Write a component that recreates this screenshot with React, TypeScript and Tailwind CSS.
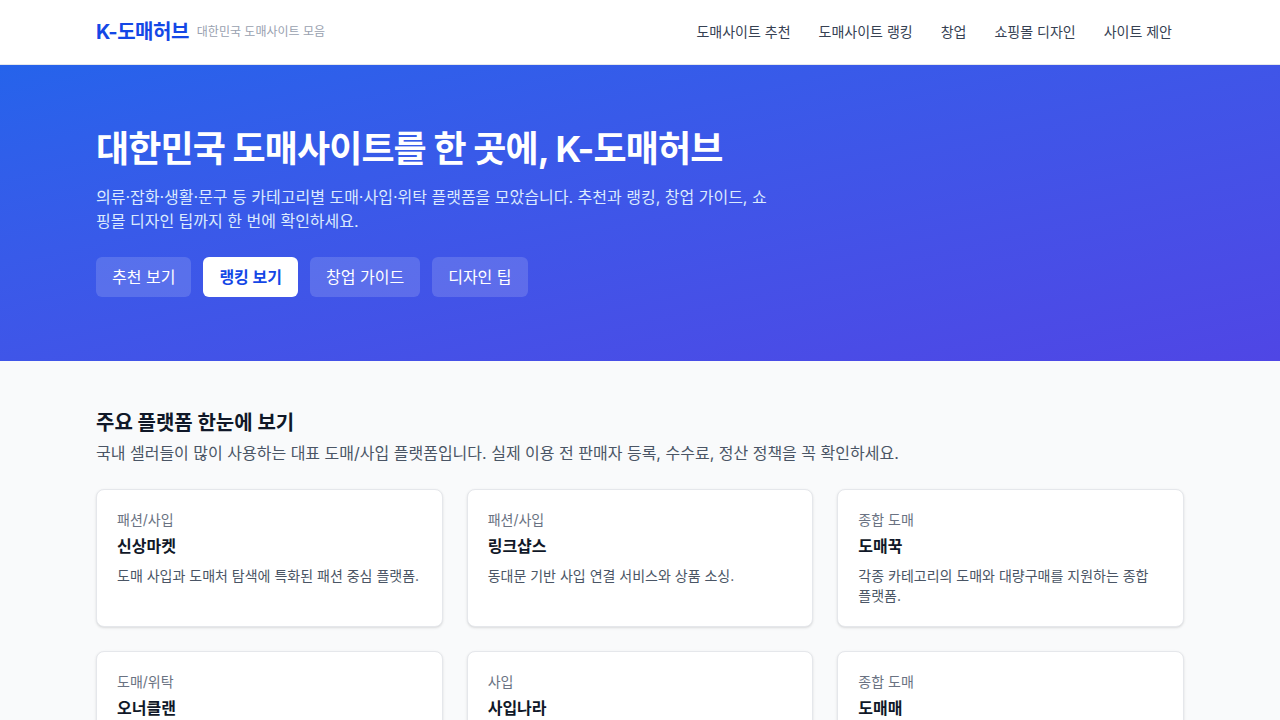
import React from "react";

const font = { fontFamily: 'Inter, "Noto Sans CJK KR", "Noto Sans", sans-serif' };

const nav = ["도매사이트 추천", "도매사이트 랭킹", "창업", "쇼핑몰 디자인", "사이트 제안"];

const cards = [
  { cat: "패션/사입", name: "신상마켓", desc: "도매 사입과 도매처 탐색에 특화된 패션 중심 플랫폼." },
  { cat: "패션/사입", name: "링크샵스", desc: "동대문 기반 사입 연결 서비스와 상품 소싱." },
  { cat: "종합 도매", name: "도매꾹", desc: "각종 카테고리의 도매와 대량구매를 지원하는 종합 플랫폼." },
  { cat: "도매/위탁", name: "오너클랜", desc: "위탁판매와 상품 연동을 지원하는 B2B 도매 플랫폼." },
  { cat: "사입", name: "사입나라", desc: "사입 대행과 물류를 함께 제공하는 서비스." },
  { cat: "종합 도매", name: "도매매", desc: "소량 구매와 위탁 판매가 가능한 도매 플랫폼." },
];

export default function App() {
  return (
    <div className="min-h-screen bg-gray-50 text-gray-900" style={font}>
      <header className="bg-white border-b border-gray-200">
        <div className="max-w-6xl mx-auto px-8 h-16 flex items-center justify-between">
          <div className="flex items-center gap-2">
            <span className="text-xl font-bold text-blue-700 tracking-tight">K-도매허브</span>
            <span className="text-xs text-gray-400">대한민국 도매사이트 모음</span>
          </div>
          <nav className="flex items-center gap-1">
            {nav.map((n) => (
              <a key={n} className="px-3 py-2 text-sm text-gray-700" href="#">
                {n}
              </a>
            ))}
          </nav>
        </div>
      </header>

      <section className="bg-gradient-to-br from-[#2563eb] to-[#4f46e5] text-white">
        <div className="max-w-6xl mx-auto px-8 py-16">
          <h1 className="text-4xl font-bold tracking-tight">대한민국 도매사이트를 한 곳에, K-도매허브</h1>
          <p className="mt-4 max-w-2xl text-base leading-6 text-blue-100">
            의류·잡화·생활·문구 등 카테고리별 도매·사입·위탁 플랫폼을 모았습니다. 추천과 랭킹, 창업 가이드, 쇼핑몰 디자인 팁까지 한 번에 확인하세요.
          </p>
          <div className="mt-6 flex gap-3">
            <button className="h-10 px-4 rounded-md bg-white/15 text-white text-base">추천 보기</button>
            <button className="h-10 px-4 rounded-md bg-white text-blue-700 text-base font-bold">랭킹 보기</button>
            <button className="h-10 px-4 rounded-md bg-white/15 text-white text-base">창업 가이드</button>
            <button className="h-10 px-4 rounded-md bg-white/15 text-white text-base">디자인 팁</button>
          </div>
        </div>
      </section>

      <section className="max-w-6xl mx-auto px-8 py-12">
        <h2 className="text-xl font-bold text-gray-900">주요 플랫폼 한눈에 보기</h2>
        <p className="mt-1 text-base text-gray-600">
          국내 셀러들이 많이 사용하는 대표 도매/사입 플랫폼입니다. 실제 이용 전 판매자 등록, 수수료, 정산 정책을 꼭 확인하세요.
        </p>
        <div className="mt-6 grid grid-cols-3 gap-6">
          {cards.map((c) => (
            <div key={c.name} className="bg-white border border-gray-200 rounded-lg shadow-sm p-5">
              <div className="text-sm text-gray-500">{c.cat}</div>
              <div className="mt-1 text-base font-bold text-gray-900">{c.name}</div>
              <p className="mt-2 text-sm text-gray-600 leading-5">{c.desc}</p>
            </div>
          ))}
        </div>
      </section>
    </div>
  );
}
